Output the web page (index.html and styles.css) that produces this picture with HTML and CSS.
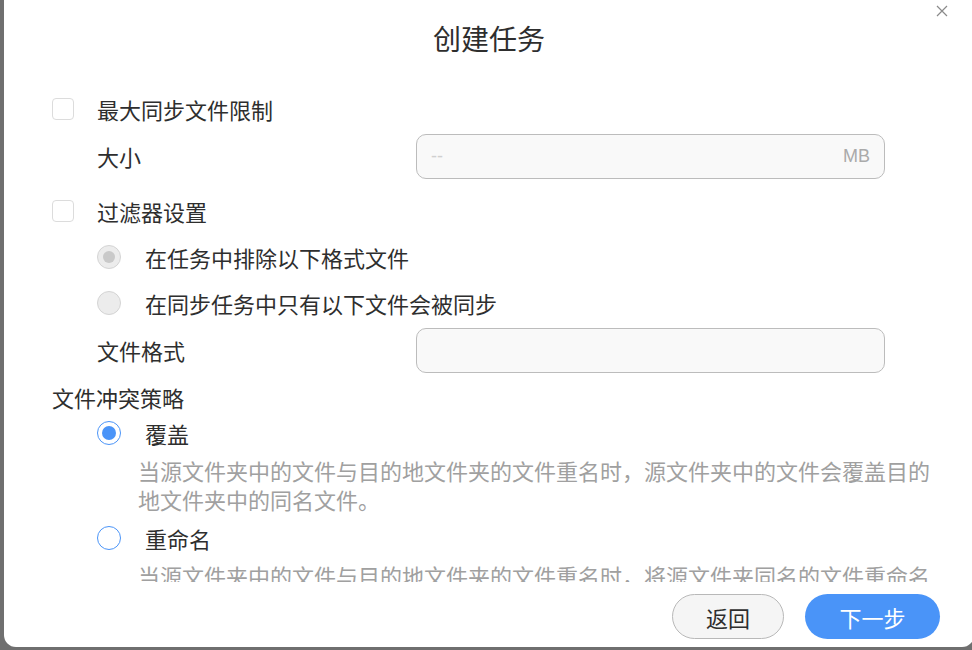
FILE: index.html
```html
<!DOCTYPE html>
<html lang="zh-CN">
<head>
    <meta charset="UTF-8">
    <meta name="viewport" content="width=device-width, initial-scale=1.0">
    <title>创建任务</title>
    <link rel="stylesheet" href="styles.css">
</head>
<body>
    <div class="dialog">
        <button type="button" class="close" aria-label="关闭">
            <svg width="12" height="12" viewBox="0 0 12 12"><path d="M1 1L11 11M11 1L1 11" stroke="#8a8a8a" stroke-width="1.2" fill="none"/></svg>
        </button>
        <h1 class="title">创建任务</h1>

        <div class="content">
            <label class="check-row">
                <span class="checkbox"></span>
                <span>最大同步文件限制</span>
            </label>
            <div class="field-row">
                <span class="field-label">大小</span>
                <div class="input">
                    <span class="placeholder">--</span>
                    <span class="unit">MB</span>
                </div>
            </div>

            <label class="check-row gap-top">
                <span class="checkbox"></span>
                <span>过滤器设置</span>
            </label>
            <label class="radio-row">
                <span class="radio disabled checked"></span>
                <span>在任务中排除以下格式文件</span>
            </label>
            <label class="radio-row">
                <span class="radio disabled"></span>
                <span>在同步任务中只有以下文件会被同步</span>
            </label>
            <div class="field-row">
                <span class="field-label">文件格式</span>
                <div class="input"></div>
            </div>

            <div class="section-title">文件冲突策略</div>
            <label class="option-row">
                <span class="radio checked"></span>
                <span>覆盖</span>
            </label>
            <p class="desc">当源文件夹中的文件与目的地文件夹的文件重名时，源文件夹中的文件会覆盖目的地文件夹中的同名文件。</p>
            <label class="option-row gap-top-sm">
                <span class="radio"></span>
                <span>重命名</span>
            </label>
            <p class="desc">当源文件夹中的文件与目的地文件夹的文件重名时，将源文件夹同名的文件重命名后再同步到目的地文件夹。</p>
        </div>

        <div class="footer">
            <button type="button" class="btn btn-back">返回</button>
            <button type="button" class="btn btn-next">下一步</button>
        </div>
    </div>
</body>
</html>
```

FILE: styles.css
```css
body {
    margin: 0;
    height: 650px;
    overflow: hidden;
    background-color: #6f6f6f;
    font-family: "Noto Sans CJK SC", "Noto Sans", sans-serif;
    color: #2e2e2e;
}

.dialog {
    position: relative;
    margin-left: 4px;
    width: 970px;
    height: 647px;
    background-color: #fff;
    border-radius: 0 0 12px 12px;
    display: flex;
    flex-direction: column;
}

.close {
    position: absolute;
    top: 5px;
    right: 26px;
    width: 12px;
    height: 12px;
    padding: 0;
    border: none;
    background: none;
    display: flex;
    cursor: pointer;
}

.title {
    margin: 18px 0 28px;
    font-size: 28px;
    font-weight: normal;
    line-height: 40px;
    text-align: center;
    color: #2e2e2e;
}

.content {
    height: 496px;
    overflow: hidden;
    padding-left: 48px;
    font-size: 22px;
}

.check-row,
.radio-row,
.field-row,
.option-row {
    display: flex;
    align-items: center;
}

.check-row {
    height: 46px;
}

.check-row.gap-top {
    margin-top: 8px;
}

.checkbox {
    width: 20px;
    height: 20px;
    border: 1px solid #dcdcdc;
    border-radius: 4px;
    margin-right: 23px;
    flex-shrink: 0;
}

.field-row {
    height: 48px;
    padding-left: 45px;
}

.field-label {
    width: 319px;
}

.input {
    box-sizing: border-box;
    width: 469px;
    height: 45px;
    border: 1px solid #bcbcbc;
    border-radius: 10px;
    background-color: #f9f9f9;
    display: flex;
    align-items: center;
    justify-content: space-between;
    padding: 0 14px;
    font-family: "Liberation Sans", Arial, sans-serif;
    font-size: 18px;
}

.placeholder {
    color: #d0d0d0;
}

.unit {
    color: #aaa;
}

.radio-row {
    height: 46px;
    padding-left: 45px;
}

.radio {
    box-sizing: border-box;
    width: 24px;
    height: 24px;
    border-radius: 50%;
    border: 1.5px solid #4a94f8;
    background-color: #fff;
    margin-right: 24px;
    flex-shrink: 0;
    display: flex;
    align-items: center;
    justify-content: center;
}

.radio.checked::after {
    content: "";
    width: 14px;
    height: 14px;
    border-radius: 50%;
    background-color: #4a94f8;
}

.radio.disabled {
    border: 1px solid #d4d4d4;
    background-color: #ececec;
}

.radio.disabled.checked::after {
    width: 12px;
    height: 12px;
    background-color: #c9c9c9;
}

.section-title {
    margin-top: 5px;
    height: 36px;
    line-height: 36px;
}

.option-row {
    height: 36px;
    padding-left: 45px;
}

.option-row.gap-top-sm {
    margin-top: 6px;
}

.desc {
    margin: 5px 0 0;
    padding-left: 86px;
    width: 800px;
    line-height: 29px;
    color: #a0a0a0;
}

.footer {
    display: flex;
    justify-content: flex-end;
    gap: 21px;
    padding: 12px 34px 0 0;
}

.btn {
    height: 45px;
    border-radius: 23px;
    font-family: "Noto Sans CJK SC", sans-serif;
    font-size: 22px;
    cursor: pointer;
}

.btn-back {
    width: 112px;
    background-color: #f5f5f5;
    border: 1px solid #b8b8b8;
    color: #2e2e2e;
}

.btn-next {
    width: 135px;
    background-color: #4a94f8;
    border: none;
    color: #fff;
}
```
